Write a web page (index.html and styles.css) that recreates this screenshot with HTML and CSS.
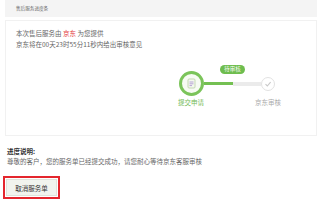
FILE: index.html
```html
<!DOCTYPE html>
<html lang="zh">
<head>
<meta charset="utf-8">
<link rel="stylesheet" href="styles.css">
</head>
<body>
<div class="page">
  <div class="header">售后服务进度条</div>
  <div class="box">
    <p class="line">本次售后服务由 <span class="red">京东</span> 为您提供</p>
    <p class="line">京东将在00天23时55分11秒内给出审核意见</p>
    <div class="progress">
      <div class="track">
        <div class="circle big">
          <svg width="11" height="11" viewBox="0 0 11 11">
            <rect x="2" y="1" width="7" height="9" rx="1" fill="#f4f8ee" stroke="#b9cfa4" stroke-width="0.8"/>
            <path d="M3.5 4h4M3.5 5.8h4M3.5 7.6h2.5" stroke="#a88fd0" stroke-width="0.8"/>
          </svg>
        </div>
        <div class="bar done"></div>
        <div class="bar todo"></div>
        <div class="circle small">
          <svg width="8" height="8" viewBox="0 0 8 8">
            <path d="M1.5 4.2L3.3 6 6.6 2.2" fill="none" stroke="#c8c8c8" stroke-width="1.1"/>
          </svg>
        </div>
        <div class="badge">待审核</div>
      </div>
      <div class="labels">
        <span class="label active">提交申请</span>
        <span class="label">京东审核</span>
      </div>
    </div>
  </div>
  <div class="note">
    <p class="note-title">进度说明:</p>
    <p class="note-text">尊敬的客户，您的服务单已经提交成功，请您耐心等待京东客服审核</p>
  </div>
  <div class="highlight">
    <button class="btn">取消服务单</button>
  </div>
</div>
</body>
</html>
```
FILE: styles.css
```css
html, body {
  margin: 0;
  padding: 0;
  background: #fff;
}
body {
  font-family: "Noto Sans CJK SC", "Noto Sans", sans-serif;
  font-size: 6.5px;
  color: #555;
}
p { margin: 0; }
.page {
  padding: 0 2px 0 5px;
}
.header {
  height: 17px;
  line-height: 17px;
  background: #f4f4f4;
  padding-left: 11px;
  font-size: 4.6px;
  color: #666;
}
.box {
  margin-top: 3px;
  height: 107px;
  border: 1px solid #f1f1f1;
  padding: 7px 0 0 10px;
}
.line {
  line-height: 10.5px;
  color: #666;
}
.red { color: #e4393c; }
.progress {
  margin-top: 22px;
  margin-left: 163px;
}
.track {
  position: relative;
  display: flex;
  align-items: center;
}
.circle {
  box-sizing: border-box;
  border-radius: 50%;
  display: flex;
  align-items: center;
  justify-content: center;
  background: #fff;
}
.circle.big {
  width: 25px;
  height: 25px;
  border: 3px solid #7bc45a;
  background: #f7fbf3;
}
.circle.small {
  width: 14px;
  height: 14px;
  border: 1.5px solid #e2e2e2;
}
.bar { height: 3px; }
.bar.done { width: 29px; background: #74c052; }
.bar.todo { width: 28px; height: 4px; background: #ebebeb; }
.badge {
  position: absolute;
  left: 41px;
  top: -6px;
  width: 25px;
  height: 9px;
  line-height: 9px;
  border-radius: 5px;
  background: #6ebd4e;
  color: #fff;
  font-size: 5.5px;
  text-align: center;
}
.labels {
  display: flex;
  gap: 37px;
  margin-left: -8px;
  margin-top: 2px;
}
.label {
  width: 40px;
  text-align: center;
  line-height: 8px;
  color: #aaa;
}
.label.active { color: #72b955; }
.note {
  margin-top: 10px;
  padding-left: 2px;
}
.note-title {
  line-height: 10px;
  color: #333;
  font-weight: bold;
}
.note-text {
  line-height: 10px;
  color: #666;
}
.highlight {
  margin-top: 10px;
  margin-left: -2px;
  width: 57px;
  height: 23px;
  box-sizing: border-box;
  border: 2px solid #e4262d;
  padding: 1px;
}
.btn {
  display: block;
  width: 100%;
  height: 100%;
  margin: 0;
  padding: 0;
  border: 1px solid #dfe3da;
  background: #f1f4ee;
  font-family: inherit;
  font-size: 6.5px;
  color: #333;
}
```
